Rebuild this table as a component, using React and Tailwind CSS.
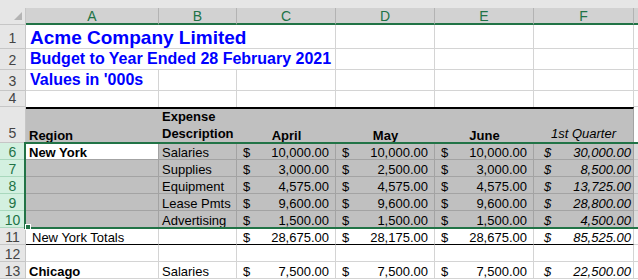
import React from 'react';

const font = "font-['Liberation_Sans',Arial,sans-serif]";

const N = 'bg-white border-[#d4d4d4]';
const G = 'bg-[#c0c0c0] border-[#a3a3a3]';

const nyRows = [
  ['Salaries', '10,000.00', '10,000.00', '10,000.00', '30,000.00'],
  ['Supplies', '3,000.00', '2,500.00', '3,000.00', '8,500.00'],
  ['Equipment', '4,575.00', '4,575.00', '4,575.00', '13,725.00'],
  ['Lease Pmts', '9,600.00', '9,600.00', '9,600.00', '28,800.00'],
  ['Advertising', '1,500.00', '1,500.00', '1,500.00', '4,500.00'],
];

function RowHead({ n, sel, pb = 'pb-[1px]' }) {
  return (
    <div
      className={`w-[26px] shrink-0 flex items-end justify-center border-r border-b text-[14px] leading-[14px] ${pb} ${
        sel ? 'bg-[#d3f0e0] text-[#217346] border-[#a9d8bd]' : 'bg-[#e6e6e6] text-[#444444] border-[#c6c6c6]'
      }`}
    >
      {n}
    </div>
  );
}

function Row({ n, h, sel, pb, children }) {
  return (
    <div className={`flex ${h}`}>
      <RowHead n={n} sel={sel} pb={pb} />
      {children}
    </div>
  );
}

function Cell({ w, className = '', children }) {
  return (
    <div className={`${w} shrink-0 flex items-end whitespace-nowrap border-r border-b text-[13px] leading-[13px] ${className}`}>
      {children}
    </div>
  );
}

function Acct({ w = 'w-[99px]', v, className = '' }) {
  return (
    <Cell w={w} className={className}>
      <div className="flex w-full justify-between pl-[6px] pr-[6px]">
        <span>$</span>
        <span>{v}</span>
      </div>
    </Cell>
  );
}

function Qtr({ v, className = '' }) {
  return (
    <Cell w="w-[100px]" className={`italic text-[12.5px] ${className}`}>
      <div className="flex w-full justify-between pl-[10px] pr-[2px]">
        <span>$</span>
        <span>{v}</span>
      </div>
    </Cell>
  );
}

const cols = [
  ['A', 'w-[133px]'],
  ['B', 'w-[78px]'],
  ['C', 'w-[99px]'],
  ['D', 'w-[99px]'],
  ['E', 'w-[99px]'],
  ['F', 'w-[100px]'],
  ['', 'w-[5px]'],
];

export default function App() {
  return (
    <div className={`relative w-[638px] h-[280px] overflow-hidden bg-white text-black ${font}`}>
      <div className="h-[8px] bg-[#e6e6e6]" />

      {/* column headers */}
      <div className="flex h-[17px]">
        <div className="w-[26px] shrink-0 flex items-end justify-end pr-[3px] pb-[4px] bg-[#e6e6e6] border-r border-b border-[#c6c6c6]">
          <svg width="8" height="8" viewBox="0 0 8 8">
            <polygon points="8,0 8,8 0,8" fill="#b4b4b4" />
          </svg>
        </div>
        {cols.map(([l, w], i) => (
          <div
            key={i}
            className={`${w} shrink-0 flex items-center justify-center bg-[#d2d2d2] border-r border-[#b3b3b3] border-b-2 border-b-[#217346] text-[14px] leading-[14px] text-[#217346]`}
          >
            {l}
          </div>
        ))}
      </div>

      {/* title rows */}
      <Row n="1" h="h-[24px]" pb="pb-[3px]">
        <Cell w="w-[310px]" className={`${N} pl-[4px] pb-[1px]`}>
          <span className="text-[19px] leading-[19px] font-bold text-[#0000ff]">Acme Company Limited</span>
        </Cell>
        <Cell w="w-[99px]" className={N} />
        <Cell w="w-[99px]" className={N} />
        <Cell w="w-[100px]" className={N} />
        <Cell w="w-[5px]" className={N} />
      </Row>
      <Row n="2" h="h-[21px]" pb="pb-[2px]">
        <Cell w="w-[310px]" className={`${N} pl-[4px] pb-[2px]`}>
          <span className="text-[16px] leading-[16px] font-bold text-[#0000ff]">Budget to Year Ended 28 February 2021</span>
        </Cell>
        <Cell w="w-[99px]" className={N} />
        <Cell w="w-[99px]" className={N} />
        <Cell w="w-[100px]" className={N} />
        <Cell w="w-[5px]" className={N} />
      </Row>
      <Row n="3" h="h-[21px]" pb="pb-[2px]">
        <Cell w="w-[133px]" className={`${N} pl-[4px] pb-[2px]`}>
          <span className="text-[16px] leading-[16px] font-bold text-[#0000ff]">Values in '000s</span>
        </Cell>
        <Cell w="w-[78px]" className={N} />
        <Cell w="w-[99px]" className={N} />
        <Cell w="w-[99px]" className={N} />
        <Cell w="w-[99px]" className={N} />
        <Cell w="w-[100px]" className={N} />
        <Cell w="w-[5px]" className={N} />
      </Row>
      <Row n="4" h="h-[16px]" pb="pb-[1px]">
        <Cell w="w-[133px]" className={`${N} border-b-0`} />
        <Cell w="w-[78px]" className={`${N} border-b-0`} />
        <Cell w="w-[99px]" className={`${N} border-b-0`} />
        <Cell w="w-[99px]" className={`${N} border-b-0`} />
        <Cell w="w-[99px]" className={`${N} border-b-0`} />
        <Cell w="w-[100px]" className={`${N} border-b-0`} />
        <Cell w="w-[5px]" className={N} />
      </Row>

      {/* header row */}
      <Row n="5" h="h-[36px]" pb="pb-[2px]">
        <Cell w="w-[133px]" className={`${G} border-r-0 border-t-2 border-t-black font-bold pl-[3px]`}>
          Region
        </Cell>
        <Cell w="w-[78px]" className={`${G} border-r-0 border-t-2 border-t-black font-bold pl-[3px] leading-[17px]`}>
          <div className="flex flex-col">
            <span>Expense</span>
            <span>Description</span>
          </div>
        </Cell>
        <Cell w="w-[99px]" className={`${G} border-r-0 border-t-2 border-t-black font-bold justify-center`}>
          April
        </Cell>
        <Cell w="w-[99px]" className={`${G} border-r-0 border-t-2 border-t-black font-bold justify-center`}>
          May
        </Cell>
        <Cell w="w-[99px]" className={`${G} border-r-0 border-t-2 border-t-black font-bold justify-center`}>
          June
        </Cell>
        <Cell w="w-[100px]" className={`${G} border-t-2 border-t-black italic justify-center pb-[2px]`}>
          1st Quarter
        </Cell>
        <Cell w="w-[5px]" className={N} />
      </Row>

      {/* New York block */}
      {nyRows.map((r, i) => (
        <Row key={i} n={String(6 + i)} h="h-[17px]" sel pb="pb-0">
          {i === 0 ? (
            <Cell w="w-[133px]" className="bg-white border-[#a3a3a3] font-bold pl-[3px]">
              New York
            </Cell>
          ) : (
            <Cell w="w-[133px]" className={G} />
          )}
          <Cell w="w-[78px]" className={`${G} pl-[3px]`}>
            {r[0]}
          </Cell>
          <Acct v={r[1]} className={G} />
          <Acct v={r[2]} className={G} />
          <Acct v={r[3]} className={G} />
          <Qtr v={r[4]} className={G} />
          <Cell w="w-[5px]" className="bg-[#dcdcdc] border-[#c4c4c4]" />
        </Row>
      ))}

      <Row n="11" h="h-[17px]" pb="pb-0">
        <Cell w="w-[133px]" className={`${N} border-b-black pl-[6px]`}>
          New York Totals
        </Cell>
        <Cell w="w-[78px]" className={`${N} border-b-black`} />
        <Acct v="28,675.00" className={`${N} border-b-black`} />
        <Acct v="28,175.00" className={`${N} border-b-black`} />
        <Acct v="28,675.00" className={`${N} border-b-black`} />
        <Qtr v="85,525.00" className={`${N} border-b-black`} />
        <Cell w="w-[5px]" className={N} />
      </Row>
      <Row n="12" h="h-[17px]" pb="pb-0">
        <Cell w="w-[133px]" className={N} />
        <Cell w="w-[78px]" className={N} />
        <Cell w="w-[99px]" className={N} />
        <Cell w="w-[99px]" className={N} />
        <Cell w="w-[99px]" className={N} />
        <Cell w="w-[100px]" className={N} />
        <Cell w="w-[5px]" className={N} />
      </Row>
      <Row n="13" h="h-[17px]" pb="pb-0">
        <Cell w="w-[133px]" className={`${N} font-bold pl-[3px]`}>
          Chicago
        </Cell>
        <Cell w="w-[78px]" className={`${N} pl-[3px]`}>
          Salaries
        </Cell>
        <Acct v="7,500.00" className={N} />
        <Acct v="7,500.00" className={N} />
        <Acct v="7,500.00" className={N} />
        <Qtr v="22,500.00" className={N} />
        <Cell w="w-[5px]" className={N} />
      </Row>

      {/* selection outline */}
      <div className="absolute left-[24px] top-[142px] w-[700px] h-[87px] border-2 border-[#217346] pointer-events-none" />
      <div className="absolute left-[25px] top-[224px] w-[6px] h-[6px] bg-[#217346] border border-white" />
    </div>
  );
}
